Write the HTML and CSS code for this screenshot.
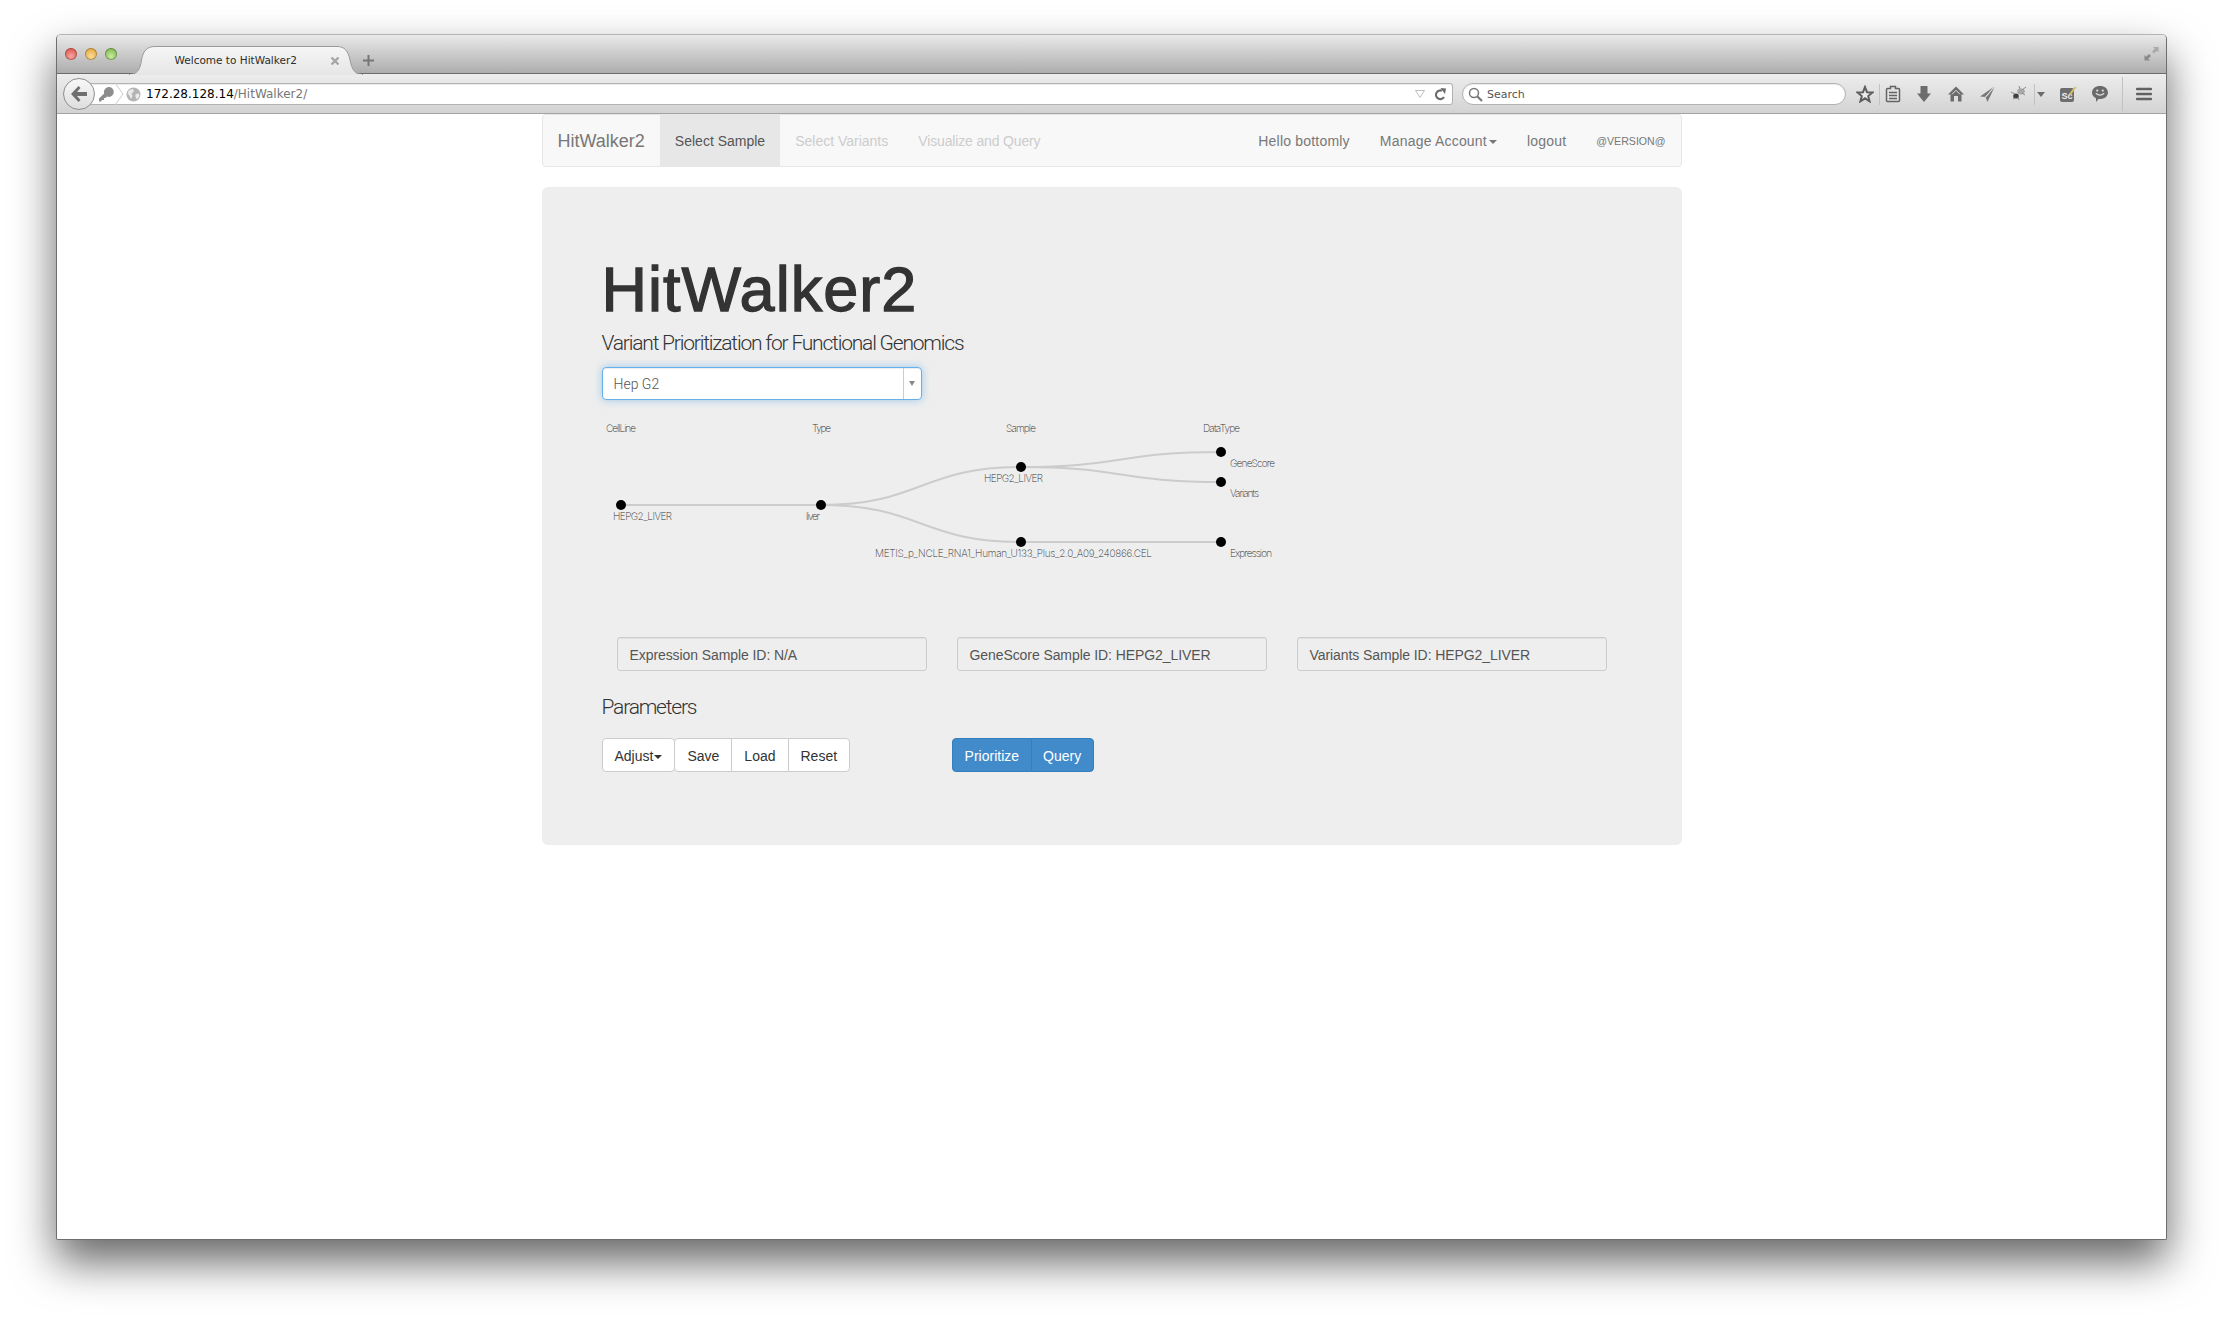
FILE: index.html
```html
<!DOCTYPE html>
<html lang="en">
<head>
  <meta charset="UTF-8">
  <title>Welcome to HitWalker2</title>
  <link rel="stylesheet" href="styles.css">
</head>
<body>
  <div class="window">
    <!-- Tab strip -->
    <div class="tabbar">
      <span class="light light-red"></span>
      <span class="light light-amber"></span>
      <span class="light light-green"></span>
      <div class="tab">
        <svg class="tab-shape" width="234" height="29" viewBox="0 0 234 29">
          <defs>
            <linearGradient id="tabFill" x1="0" y1="0" x2="0" y2="1">
              <stop offset="0" stop-color="#f6f6f6"/>
              <stop offset="1" stop-color="#e6e6e6"/>
            </linearGradient>
          </defs>
          <path d="M0 28.5C8 28.5 11 24 12.500 14C14 5 18 .5 26 .5H208C216 .5 219 5 221 14C223 24 226 28.5 234 28.5Z" fill="url(#tabFill)" stroke="#9a9a9a"/>
          <path d="M1 29H233" stroke="#e6e6e6" stroke-width="2"/>
        </svg>
        <span class="tab-title">Welcome to HitWalker2</span>
        <svg class="tab-close" width="10" height="10" viewBox="0 0 10 10"><path d="M1.5 1.5L8.5 8.5M8.5 1.5L1.5 8.5" stroke="#a5a5a5" stroke-width="2.4"/></svg>
      </div>
      <svg class="new-tab" width="11" height="11" viewBox="0 0 11 11"><path d="M5.5 0V11M0 5.5H11" stroke="#777" stroke-width="2"/></svg>
      <svg class="expand" width="15" height="15" viewBox="0 0 15 15">
        <path d="M9 1H14.5V6.500L12.800 4.800L10 7.600L8 5.600L10.800 2.800Z" fill="#a9a9a9"/>
        <path d="M6 14.500H.5V9L2.200 10.700L5 7.900L7 9.900L4.200 12.700Z" fill="#8a8a8a"/>
      </svg>
    </div>

    <!-- Navigation toolbar -->
    <div class="toolbar">
      <div class="back">
        <svg width="18" height="16" viewBox="0 0 18 16"><path d="M8.500 0L1 8L8.500 16L10.500 14L7 10H17V6H7L10.500 2Z" fill="#6f6f6f"/></svg>
      </div>
      <div class="urlbar">
        <svg class="key" width="15" height="15" viewBox="0 0 15 15"><path d="M9.500 0A5 5 0 0 1 10 10L8 9.500L6.500 11H5V13H3L2 14.500H0V11.500L5.200 6.500A5 5 0 0 1 9.500 0Z" fill="#8d8d8d"/></svg>
        <svg class="crumb" width="9" height="22" viewBox="0 0 9 22"><path d="M0 0L8 11L0 22" fill="#fff" stroke="#c9c9c9"/></svg>
        <svg class="globe" width="15" height="15" viewBox="0 0 15 15"><circle cx="7.500" cy="7.500" r="7" fill="#b4b4b4"/><path d="M3 3L7 2L8 4.500L5.500 6.500L6.500 9L5 12L3 8L1.500 6.500ZM9.500 7L13 6.500L13.500 9L11 12.500L9.500 10Z" fill="#eaeaea"/></svg>
        <span class="url-host">172.28.128.14</span><span class="url-path">/HitWalker2/</span>
        <svg class="url-drop" width="10" height="8" viewBox="0 0 10 8"><path d="M.5 .5H9.500L5 7.500Z" fill="#fff" stroke="#bdbdbd"/></svg>
        <svg class="reload" width="12" height="13" viewBox="0 0 12 13"><path d="M10 9A4.300 4.300 0 1 1 8 2.800" fill="none" stroke="#6b6b6b" stroke-width="2.200"/><path d="M6.500 0L12 .5L11 6Z" fill="#6b6b6b"/></svg>
      </div>
      <div class="searchbar">
        <svg class="search-glass" width="15" height="15" viewBox="0 0 15 15"><circle cx="6" cy="6" r="4.500" fill="none" stroke="#777" stroke-width="1.500"/><path d="M9.500 9.500L14 14" stroke="#777" stroke-width="2.200"/></svg>
        <span class="search-text">Search</span>
      </div>

      <svg class="ti ti-star" width="18" height="18" viewBox="0 0 18 18"><path d="M9 2L11 7.200L16.500 7.500L12.200 11L13.600 16.300L9 13.300L4.400 16.300L5.800 11L1.500 7.500L7 7.200Z" fill="#ececec" stroke="#5e5e5e" stroke-width="2"/></svg>
      <span class="sep sep-a"></span>
      <svg class="ti ti-clip" width="16" height="18" viewBox="0 0 16 18"><path d="M5.500 1.500H10.500V3.500H13.500Q14.500 3.500 14.500 4.500V15.500Q14.500 16.500 13.500 16.500H2.500Q1.500 16.500 1.500 15.500V4.500Q1.500 3.500 2.500 3.500H5.500Z" fill="#e2e2e2" stroke="#636363" stroke-width="1.500"/><path d="M4 7.500H12M4 10.500H12M4 13.500H12" stroke="#636363" stroke-width="1.500"/></svg>
      <svg class="ti ti-down" width="16" height="18" viewBox="0 0 16 18"><path d="M4.500 1H11.500V8.500H15L8 17L1 8.500H4.500Z" fill="#6c6c6c"/></svg>
      <svg class="ti ti-home" width="18" height="18" viewBox="0 0 18 18"><path d="M9 1.500L17 9.500H14.500V16.500H11V11H7V16.500H3.500V9.500H1Z" fill="#6c6c6c"/><path d="M5 9.300L9 5.300L13 9.300" fill="none" stroke="#e6e6e6"/></svg>
      <svg class="ti ti-plane" width="18" height="18" viewBox="0 0 18 18"><path d="M16 1L1 11.500L6.500 12L8.500 17Z" fill="#777"/><path d="M16 1L6.500 12L8.500 10Z" fill="#ececec" stroke="#ececec" stroke-width=".8"/></svg>
      <svg class="ti ti-bug" width="18" height="18" viewBox="0 0 18 18"><ellipse cx="6" cy="11" rx="2.800" ry="2.600" fill="#3f3f3f"/><ellipse cx="11" cy="6.500" rx="3.800" ry="3" fill="#a8a8a8"/><path d="M1 7L5 9M3 14L6 13M9 15L8 12M15 10L12 8M16 2L12 5M9 1L10 4" stroke="#8c8c8c"/></svg>
      <span class="sep sep-b"></span>
      <svg class="ti ti-drop" width="8" height="5" viewBox="0 0 8 5"><path d="M0 0H8L4 5Z" fill="#6c6c6c"/></svg>
      <svg class="ti ti-note" width="18" height="18" viewBox="0 0 18 18">
        <rect x="1" y="3" width="14" height="14" rx="2" fill="#6e6e6e"/>
        <text x="2.500" y="14" class="note-text">Sc</text>
        <path d="M10 9L16 1.500L17.500 2.500L11.500 10Z" fill="#d8c266"/>
      </svg>
      <svg class="ti ti-smile" width="18" height="18" viewBox="0 0 18 18"><path d="M9 1C13.500 1 17 3.700 17 7.500S13.500 14 9 14H7.500L5 17V13.300C2.700 12.300 1 10.200 1 7.500C1 3.700 4.500 1 9 1Z" fill="#6a6a6a"/><circle cx="6.200" cy="5.600" r="1.100" fill="#ddd"/><circle cx="11.800" cy="5.600" r="1.100" fill="#ddd"/><path d="M4.800 8.300Q9 12 13.200 8.300" fill="none" stroke="#ddd" stroke-width="1.300"/></svg>
      <span class="sep sep-c"></span>
      <svg class="ti ti-menu" width="16" height="14" viewBox="0 0 16 14"><path d="M1 2H15M1 7H15M1 12H15" stroke="#626262" stroke-width="2.400" stroke-linecap="round"/></svg>
    </div>

    <!-- Page content -->
    <div class="page">
      <div class="container">
        <nav class="navbar">
          <a class="brand">HitWalker2</a>
          <ul class="nav">
            <li class="active">Select Sample</li>
            <li class="disabled">Select Variants</li>
            <li class="disabled disabled-last">Visualize and Query</li>
          </ul>
          <ul class="nav nav-right">
            <li>Hello bottomly</li>
            <li>Manage Account<span class="caret caret-nav"></span></li>
            <li>logout</li>
            <li class="version">@VERSION@</li>
          </ul>
        </nav>

        <div class="jumbotron">
          <h1>HitWalker2</h1>
          <p class="lead">Variant Prioritization for Functional Genomics</p>

          <div class="sample-select">
            <span class="sample-value">Hep G2</span>
            <span class="sample-arrow"><span class="caret caret-select"></span></span>
          </div>

          <svg class="tree" width="720" height="222" viewBox="0 0 720 222">
            <g class="links">
              <path d="M19 90H219"/>
              <path d="M219 90C319 90 319 52 419 52"/>
              <path d="M219 90C319 90 319 127 419 127"/>
              <path d="M419 52C519 52 519 37 619 37"/>
              <path d="M419 52C519 52 519 67 619 67"/>
              <path d="M419 127H619"/>
            </g>
            <g class="heads">
              <text x="4" y="17" textLength="30">CellLine</text>
              <text x="210" y="17" textLength="19">Type</text>
              <text x="404" y="17" textLength="30">Sample</text>
              <text x="601" y="17" textLength="37">DataType</text>
            </g>
            <g class="nodes">
              <circle cx="19" cy="90" r="5"/>
              <circle cx="219" cy="90" r="5"/>
              <circle cx="419" cy="52" r="5"/>
              <circle cx="419" cy="127" r="5"/>
              <circle cx="619" cy="37" r="5"/>
              <circle cx="619" cy="67" r="5"/>
              <circle cx="619" cy="127" r="5"/>
            </g>
            <g class="labels">
              <text x="11" y="105" textLength="59">HEPG2_LIVER</text>
              <text x="204" y="105" textLength="14">liver</text>
              <text x="382" y="67" textLength="59">HEPG2_LIVER</text>
              <text x="273" y="142" textLength="277">METIS_p_NCLE_RNA1_Human_U133_Plus_2.0_A09_240866.CEL</text>
              <text x="628" y="52" textLength="45">GeneScore</text>
              <text x="628" y="82" textLength="29">Variants</text>
              <text x="628" y="142" textLength="42">Expression</text>
            </g>
          </svg>

          <div class="sample-ids">
            <div class="well">Expression Sample ID: N/A</div>
            <div class="well">GeneScore Sample ID: HEPG2_LIVER</div>
            <div class="well">Variants Sample ID: HEPG2_LIVER</div>
          </div>

          <h4 class="params-title">Parameters</h4>

          <div class="actions">
            <div class="btn-group">
              <button class="btn btn-adjust">Adjust<span class="caret caret-btn"></span></button>
            </div>
            <div class="btn-group">
              <button class="btn">Save</button>
              <button class="btn">Load</button>
              <button class="btn">Reset</button>
            </div>
            <div class="btn-group btn-group-primary">
              <button class="btn btn-primary">Prioritize</button>
              <button class="btn btn-primary">Query</button>
            </div>
          </div>
        </div>
      </div>
    </div>
  </div>
</body>
</html>
```

FILE: styles.css
```css
html, body {
  height: 100%;
}

body {
  margin: 0;
  padding: 34px 56px 0;
  box-sizing: border-box;
  background: #fff;
  overflow: hidden;
  font-family: "Liberation Sans", Arial, sans-serif;
  font-size: 14px;
  color: #333;
}

.window {
  height: 1206px;
  box-sizing: border-box;
  display: flex;
  flex-direction: column;
  background: #fff;
  border: 1px solid #6e6e6e;
  border-top-color: #b4b4b4;
  border-radius: 5px 5px 2px 2px;
  box-shadow: 0 22px 44px rgba(0,0,0,0.6);
}

/* Tab strip */
.tabbar {
  height: 39px;
  flex: none;
  display: flex;
  align-items: flex-start;
  box-sizing: border-box;
  padding: 13px 0 0 8px;
  background: linear-gradient(#e9e9e9, #adadad);
  border-bottom: 1px solid #6c6c6c;
  border-radius: 4px 4px 0 0;
}

.light {
  width: 12px;
  height: 12px;
  border-radius: 50%;
  margin-right: 8px;
  box-shadow: inset 0 0 0 1px rgba(0,0,0,0.25);
}

.light-red { background: radial-gradient(circle at 50% 70%, #f6a6a0, #d9423c); }
.light-amber { background: radial-gradient(circle at 50% 70%, #fbdc9a, #dc9a26); }
.light-green { background: radial-gradient(circle at 50% 70%, #c9eba0, #6cab3a); }

.tab {
  position: relative;
  width: 234px;
  height: 29px;
  margin: -2px 0 0 4px;
}

.tab-shape {
  position: absolute;
  top: 0;
  left: 0;
}

.tab-title {
  position: absolute;
  left: 45.5px;
  top: 8px;
  font-family: "DejaVu Sans", sans-serif;
  font-size: 10.5px;
  color: #2c2c2c;
  white-space: nowrap;
}

.tab-close {
  position: absolute;
  left: 200.5px;
  top: 10px;
}

.new-tab {
  margin: 7px 0 0;
}

.expand {
  margin: -2px 7px 0 auto;
}

/* Toolbar */
.toolbar {
  height: 40px;
  flex: none;
  display: flex;
  align-items: center;
  box-sizing: border-box;
  padding: 1px 0 0 6px;
  background: linear-gradient(#ededed, #d3d3d3);
  border-bottom: 1px solid #a3a3a3;
}

.back {
  width: 30px;
  height: 30px;
  flex: none;
  display: flex;
  align-items: center;
  justify-content: center;
  margin-right: -14px;
  position: relative;
  z-index: 2;
  border: 1px solid #8f8f8f;
  border-radius: 50%;
  background: linear-gradient(#f8f8f8, #dedede);
}

.urlbar, .searchbar {
  height: 22px;
  display: flex;
  align-items: center;
  background: #fff;
  border: 1px solid #b2b2b2;
  box-shadow: inset 0 1px 1px rgba(0,0,0,0.08);
}

.urlbar {
  width: 1372px;
  flex: none;
  box-sizing: border-box;
  padding: 0 6px 0 18px;
  border-radius: 0 3px 3px 0;
  border-left: none;
  font-family: "DejaVu Sans", sans-serif;
  font-size: 12px;
}

.crumb {
  margin-left: 1px;
}

.globe {
  margin: 0 5px 0 2px;
}

.url-host {
  color: #000;
}

.url-path {
  color: #777;
}

.url-drop {
  margin-left: auto;
}

.reload {
  margin-left: 9px;
}

.searchbar {
  width: 384px;
  flex: none;
  box-sizing: border-box;
  margin-left: 9px;
  padding-left: 5px;
  border-radius: 11px;
  font-family: "DejaVu Sans", sans-serif;
  font-size: 11px;
}

.search-text {
  margin-left: 4px;
  color: #555;
}

.ti {
  flex: none;
}

.sep {
  width: 1px;
  height: 21px;
  flex: none;
  background: #c2c2c2;
}

.ti-star { margin-left: 10px; }
.sep-a { margin-left: 5px; }
.ti-clip { margin-left: 5px; }
.ti-down { margin-left: 15px; }
.ti-home { margin-left: 15px; }
.ti-plane { margin-left: 14px; }
.ti-bug { margin-left: 13px; }
.sep-b { margin-left: 6px; }
.ti-drop { margin-left: 2px; }
.ti-note { margin-left: 14px; }
.ti-smile { margin-left: 14px; }
.sep-c { margin-left: 13px; height: 34px; }
.ti-menu { margin-left: 13px; }

.note-text {
  font-family: "Liberation Sans", sans-serif;
  font-size: 9px;
  font-weight: bold;
  fill: #eee;
}

/* Page */
.page {
  flex: 1;
  background: #fff;
  border-radius: 0 0 2px 2px;
}

.container {
  width: 1140px;
  margin: 0 auto;
}

.navbar {
  display: flex;
  height: 53px;
  box-sizing: border-box;
  background: #f8f8f8;
  border: 1px solid #e7e7e7;
  border-radius: 4px;
}

.brand {
  padding: 16px 15px 14px;
  font-size: 18px;
  line-height: 20px;
  color: #777;
}

.nav {
  display: flex;
  list-style: none;
  margin: 0;
  padding: 0;
}

.nav li {
  padding: 2px 15px 0;
  line-height: 49px;
  color: #777;
  white-space: nowrap;
}

.nav .active {
  background: #e7e7e7;
  color: #555;
}

.nav .disabled {
  color: #ccc;
}

.nav .disabled-last {
  letter-spacing: -0.15px;
}

.nav-right {
  margin-left: auto;
}

.nav-right li {
  letter-spacing: 0.2px;
}

.nav-right .version {
  font-size: 10.6px;
  letter-spacing: 0;
}

.caret {
  display: inline-block;
  width: 0;
  height: 0;
  vertical-align: middle;
  border-top: 4px solid currentColor;
  border-left: 4px solid transparent;
  border-right: 4px solid transparent;
}

.caret-nav {
  margin-left: 2px;
}

.jumbotron {
  margin-top: 20px;
  height: 658px;
  box-sizing: border-box;
  padding: 48px 60px 0;
  background: #eee;
  border-radius: 6px;
}

h1 {
  margin: 20px 0 0;
  font-size: 63px;
  line-height: 69px;
  font-weight: 400;
  letter-spacing: 1px;
  -webkit-text-stroke: 1.3px #333;
  color: #333;
}

.lead, .params-title {
  font-family: Roboto, "Liberation Sans", sans-serif;
  font-size: 21px;
  line-height: 30px;
  font-weight: 300;
  letter-spacing: -1.2px;
  color: #333;
}

.lead {
  margin: 4px 0 0;
}

.sample-select {
  display: flex;
  width: 320px;
  height: 33px;
  box-sizing: border-box;
  margin-top: 9px;
  background: #fff;
  border: 1px solid #66afe9;
  border-radius: 4px;
  box-shadow: inset 0 1px 1px rgba(0,0,0,0.075), 0 0 8px rgba(102,175,233,0.6);
}

.sample-value {
  flex: 1;
  padding-left: 11px;
  font-family: Roboto, "Liberation Sans", sans-serif;
  font-weight: 300;
  line-height: 33px;
  color: #555;
}

.sample-arrow {
  width: 17px;
  display: flex;
  align-items: center;
  justify-content: center;
  border-left: 1px solid #ccc;
}

.caret-select {
  color: #888;
  border-top-width: 5px;
  border-left-width: 3px;
  border-right-width: 3px;
}

.tree {
  display: block;
  margin-top: 15px;
}

.links path {
  fill: none;
  stroke: #ccc;
  stroke-width: 2;
}

.nodes circle {
  fill: #000;
}

.tree text {
  font-family: Inter, "Liberation Sans", sans-serif;
  font-size: 10px;
  font-weight: 200;
  fill: #333;
}

.sample-ids {
  display: flex;
  gap: 30px;
  margin-left: 15px;
}

.well {
  width: 310px;
  height: 34px;
  box-sizing: border-box;
  padding: 0 12px;
  line-height: 34px;
  letter-spacing: -0.08px;
  color: #555;
  background: #eee;
  border: 1px solid #ccc;
  border-radius: 3px;
  box-shadow: inset 0 1px 1px rgba(0,0,0,0.05);
}

.params-title {
  margin: 21px 0 0;
}

.actions {
  display: flex;
  margin-top: 16px;
}

.btn-group {
  display: flex;
}

.btn-group-primary {
  margin-left: 103px;
}

.btn {
  height: 34px;
  margin: 0 0 0 -1px;
  padding: 1px 12px 0;
  font-family: inherit;
  font-size: 14px;
  color: #333;
  background: #fff;
  border: 1px solid #ccc;
  border-radius: 0;
}

.btn-group .btn:first-child {
  border-radius: 4px 0 0 4px;
}

.btn-group .btn:last-child {
  border-radius: 0 4px 4px 0;
}

.btn-group .btn:only-child {
  border-radius: 4px;
}

.btn-adjust {
  margin-left: 0;
}

.caret-btn {
  margin-left: 1px;
}

.btn-primary {
  padding: 1px 11.5px 0;
  color: #fff;
  background: #428bca;
  border-color: #357ebd;
}
```
